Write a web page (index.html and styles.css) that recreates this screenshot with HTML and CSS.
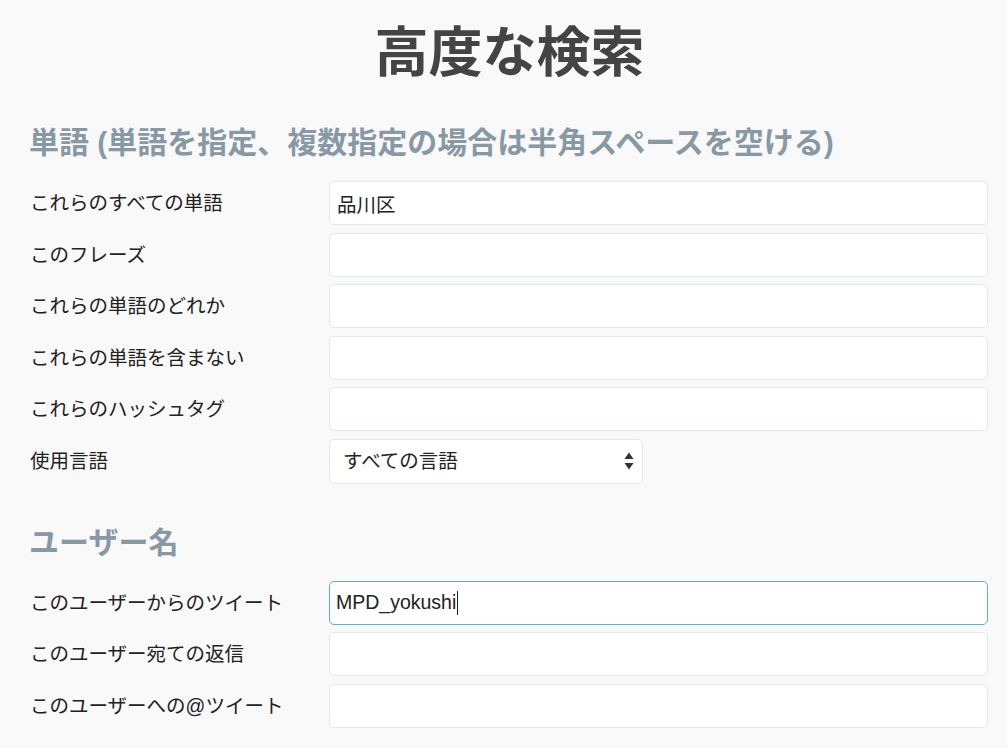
FILE: index.html
```html
<!DOCTYPE html>
<html lang="ja">
<head>
<meta charset="utf-8">
<title>高度な検索</title>
<link rel="stylesheet" href="styles.css">
</head>
<body>
<main class="page">
  <h1 class="title">高度な検索</h1>

  <section class="group">
    <h2 class="group-title">単語 (単語を指定、複数指定の場合は半角スペースを空ける)</h2>
    <div class="rows">
      <label class="label">これらのすべての単語</label>
      <input class="field" type="text" value="品川区">
      <label class="label">このフレーズ</label>
      <input class="field" type="text">
      <label class="label">これらの単語のどれか</label>
      <input class="field" type="text">
      <label class="label">これらの単語を含まない</label>
      <input class="field" type="text">
      <label class="label">これらのハッシュタグ</label>
      <input class="field" type="text">
      <label class="label">使用言語</label>
      <div class="select-wrap">
        <select class="select">
          <option>すべての言語</option>
        </select>
        <svg class="select-arrow" width="10" height="18" viewBox="0 0 10 18" aria-hidden="true">
          <path d="M5 0.5 L9.5 7 L0.5 7 Z" fill="#333"/>
          <path d="M0.5 11 L9.5 11 L5 17.5 Z" fill="#333"/>
        </svg>
      </div>
    </div>
  </section>

  <section class="group group-user">
    <h2 class="group-title">ユーザー名</h2>
    <div class="rows">
      <label class="label">このユーザーからのツイート</label>
      <div class="field field-focus"><span>MPD_yokushi</span><span class="caret"></span></div>
      <label class="label">このユーザー宛ての返信</label>
      <input class="field" type="text">
      <label class="label">このユーザーへの@ツイート</label>
      <input class="field" type="text">
    </div>
  </section>
</main>
</body>
</html>
```

FILE: styles.css
```css
* { box-sizing: border-box; }

html, body {
  margin: 0;
  padding: 0;
  background: #f9f9f9;
}

body {
  font-family: "Liberation Sans", "Noto Sans CJK JP", sans-serif;
  color: #222;
}

.page {
  padding: 21px 19px 0 29px;
}

.title {
  margin: 0;
  text-align: center;
  font-size: 54px;
  line-height: 65px;
  font-weight: 700;
  color: #444;
  padding-left: 2px;
}

.group {
  margin-top: 39px;
}

.group-user {
  margin-top: 41px;
}

.group-title {
  margin: 0 0 20px;
  font-size: 30px;
  line-height: 36px;
  font-weight: 700;
  color: #8899a6;
}

.rows {
  display: grid;
  grid-template-columns: 300px 1fr;
  row-gap: 7.5px;
  align-items: center;
}

.label {
  font-size: 19.5px;
  line-height: 24px;
  color: #222;
  padding-left: 1px;
}

.field {
  display: flex;
  align-items: center;
  height: 44px;
  width: 100%;
  margin: 0;
  padding: 0 7px;
  border: 1px solid #e1e8ed;
  border-radius: 5px;
  background: #fff;
  font-family: "Liberation Sans", "Noto Sans CJK JP", sans-serif;
  font-size: 19.5px;
  color: #222;
  outline: none;
}

.field-focus {
  border-color: #5aaee6;
  padding-left: 6px;
}

.caret {
  display: inline-block;
  width: 1px;
  height: 24px;
  background: #222;
  margin-left: 1px;
}

.select-wrap {
  position: relative;
  width: 314px;
}

.select {
  display: block;
  width: 100%;
  height: 45px;
  margin: 0;
  padding: 0 13px;
  border: 1px solid #e1e8ed;
  border-radius: 5px;
  background: #fff;
  font-family: "Liberation Sans", "Noto Sans CJK JP", sans-serif;
  font-size: 19.5px;
  color: #222;
  appearance: none;
  -webkit-appearance: none;
}

.select-arrow {
  position: absolute;
  right: 9px;
  top: 13px;
  pointer-events: none;
}
```
